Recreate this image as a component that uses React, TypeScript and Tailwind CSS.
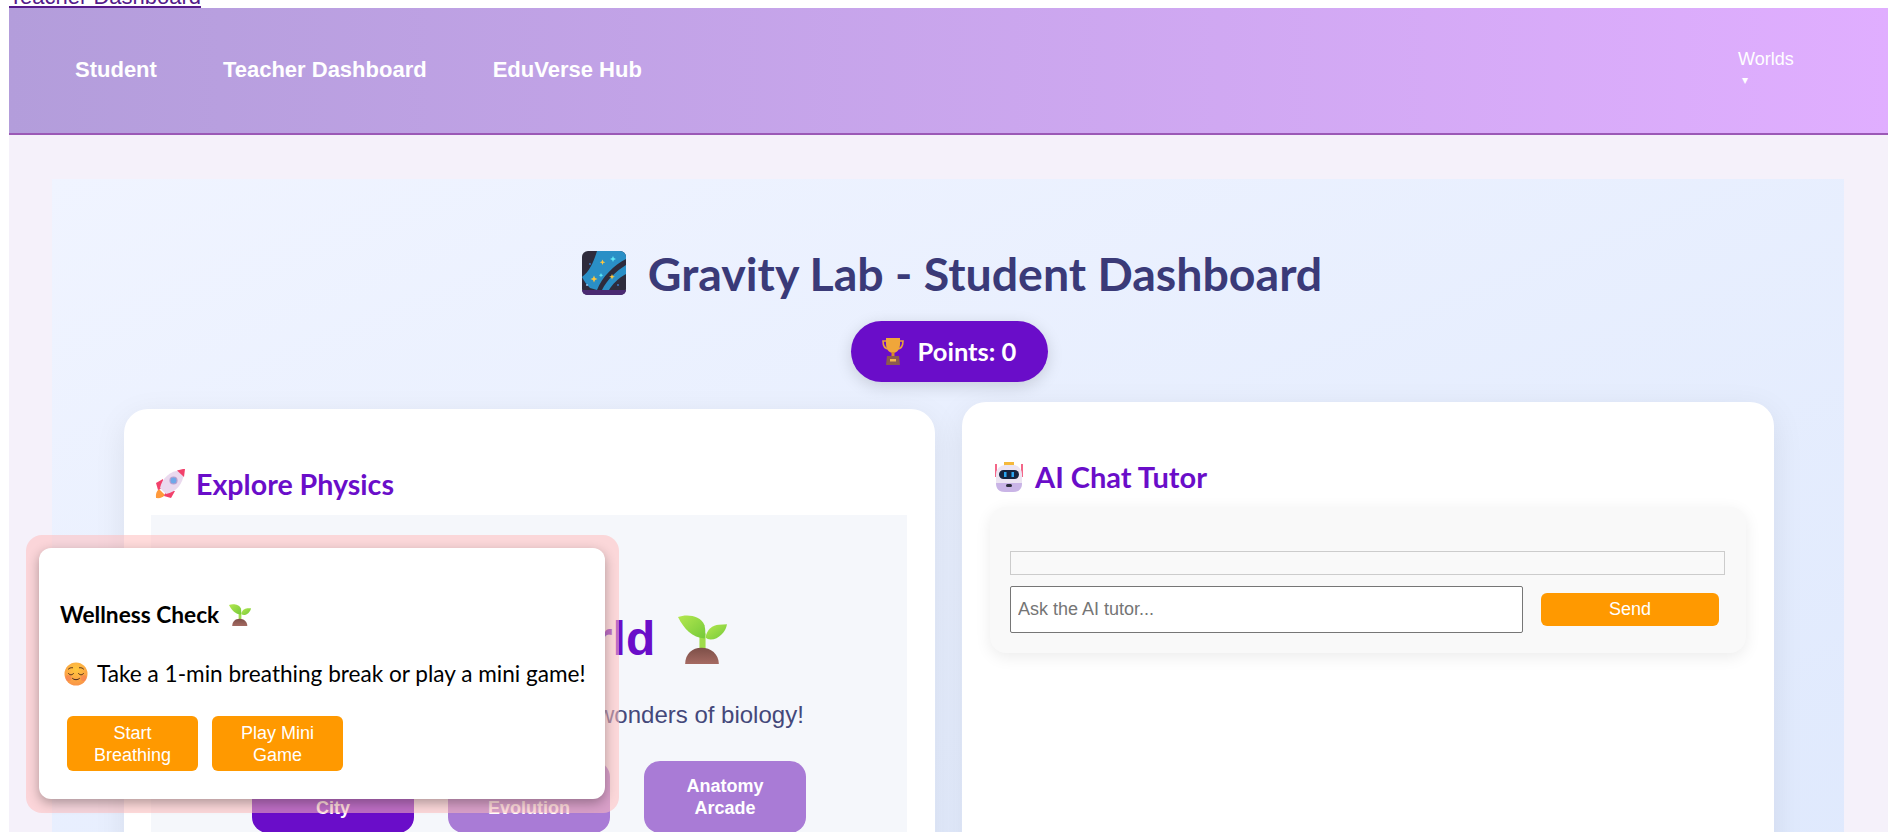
const sans = "font-['Lato',sans-serif]";

function Seedling({ className, id }: { className: string; id: string }) {
  return (
    <svg viewBox="0 0 48 48" className={className}>
      <defs>
        <linearGradient id={`${id}-leaf`} x1="0" y1="0" x2="1" y2="1">
          <stop offset="0" stopColor="#b5e84f" />
          <stop offset="1" stopColor="#74c93a" />
        </linearGradient>
        <linearGradient id={`${id}-soil`} x1="0" y1="0" x2="0" y2="1">
          <stop offset="0" stopColor="#7d4f48" />
          <stop offset="1" stopColor="#a56a62" />
        </linearGradient>
      </defs>
      <path d="M21 18h6v18h-6z" fill="#9fdc4a" />
      <path d="M0 2C8-1 22 0 26 10c1 5 1 10 0 13C14 22 6 14 0 2Z" fill={`url(#${id}-leaf)`} />
      <path d="M27 22c1-8 7-12 13-12.500L48 9c-1 7-8 15-16 15-2 0-4-1-5-2Z" fill={`url(#${id}-leaf)`} />
      <path d="M7 48c0-10 7-16 16-16s17 6 17 16Z" fill={`url(#${id}-soil)`} />
    </svg>
  );
}

function MilkyWay() {
  return (
    <svg viewBox="0 0 44 44" className="h-[44px] w-[44px] shrink-0">
      <rect width="44" height="44" rx="6" fill="#2e2b3c" />
      <path d="M15 0h23a6 6 0 0 1 6 6v2C32 14 20 26 15 39l-7-2C5 34 2 30 0 26 8 20 12 10 15 0Z" fill="#2a8fc6" />
      <path d="M44 14v9c-8 4-14 11-17 16h-7c5-10 14-19 24-25Z" fill="#2a8fc6" />
      <path d="M0 39h44a5 5 0 0 1-5 5H5a5 5 0 0 1-5-5Z" fill="#4b2a72" />
      <path d="M12 24.500l1 2.500 2.500 1-2.500 1-1 2.500-1-2.500-2.500-1 2.500-1Z" fill="#ffc83d" />
      <path d="M20.500 8.500l.8 2 2 .8-2 .8-.8 2-.8-2-2-.8 2-.8Z" fill="#ffc83d" />
      <path d="M30 23l.8 2 2 .8-2 .8-.8 2-.8-2-2-.8 2-.8Z" fill="#ffc83d" />
      <path d="M31 5l.9 2.100 2.100.9-2.100.9-.9 2.100-.9-2.100-2.100-.9 2.100-.9Z" fill="#5fe6f5" />
      <path d="M19 22l.7 1.500 1.500.7-1.500.7-.7 1.500-.7-1.500-1.500-.7 1.500-.7Z" fill="#5fe6f5" />
      <circle cx="8" cy="13" r="0.900" fill="#3f7fd0" />
      <circle cx="5" cy="34" r="0.900" fill="#9fd4ff" />
      <circle cx="36" cy="34" r="0.900" fill="#3f7fd0" />
    </svg>
  );
}

function Trophy() {
  return (
    <svg viewBox="0 0 22 27" className="h-[27px] w-[22px] shrink-0">
      <path d="M5 3H1c0 5 2 8 6 8M17 3h4c0 5-2 8-6 8" fill="none" stroke="#e8a33a" strokeWidth="1.600" />
      <path d="M4 0h14v6c0 5-3 9-7 9S4 11 4 6Z" fill="#f0a63a" />
      <path d="M9.500 14h3v5h-3z" fill="#d98a2b" />
      <path d="M5 18h12l1 9H4Z" fill="#8c5a4e" />
      <path d="M8 21h6v2.500H8z" fill="#f3b74e" />
    </svg>
  );
}

function Rocket() {
  return (
    <svg viewBox="0 0 30 30" className="h-[30px] w-[30px] shrink-0">
      <path d="M1 29c-.5-4 .5-7 3-9l6 6c-2 2.500-5 3.500-9 3Z" fill="#ff9a3c" />
      <path d="M8 10 1 14l2 7 5-2ZM20 22l-4 7-7-2 2-5Z" fill="#f2416b" />
      <path d="M5 19C7 9 15 2 26 1l3 3c-1 11-8 19-18 21Z" fill="#ead9ee" />
      <path d="M22 1.500 28 0l2 0-1 8Z" fill="#f2416b" />
      <circle cx="18.500" cy="11.500" r="3.500" fill="#6fa8e8" stroke="#b79fd0" strokeWidth="1.200" />
    </svg>
  );
}

function Robot() {
  return (
    <svg viewBox="0 0 30 30" className="h-[30px] w-[30px] shrink-0">
      <path d="M2 2v13M28 2v13" stroke="#f2416b" strokeWidth="1.600" />
      <path d="M10 0h10v4H10z" fill="#f5b93c" />
      <rect x="2" y="3" width="26" height="27" rx="9" fill="#ece4f2" />
      <path d="M2 21h26v0c0 6-3 9-9 9h-8c-6 0-9-3-9-9Z" fill="#c9b4e6" />
      <rect x="5" y="8" width="20" height="9" rx="4.500" fill="#16243f" />
      <path d="M10 10h2.500v5H10zM17.500 10H20v5h-2.500z" fill="#2aa5f0" />
      <rect x="12" y="22" width="6" height="3" rx="1.500" fill="#2b2b3a" />
    </svg>
  );
}

function Relieved() {
  return (
    <svg viewBox="0 0 24 24" className="h-[24px] w-[24px] shrink-0">
      <defs>
        <radialGradient id="face" cx="0.5" cy="0.3" r="0.8">
          <stop offset="0" stopColor="#ffc83d" />
          <stop offset="1" stopColor="#f98d4a" />
        </radialGradient>
      </defs>
      <circle cx="12" cy="12" r="11.500" fill="url(#face)" />
      <circle cx="4.500" cy="16" r="3" fill="#f6695f" opacity="0.4" />
      <circle cx="19.500" cy="16" r="3" fill="#f6695f" opacity="0.4" />
      <path
        d="M4.500 11.500c1 1.800 4 1.800 5 0M14.500 11.500c1 1.800 4 1.800 5 0M8.500 16.500c1.500 1.700 5.500 1.700 7 0M4.500 7c1-1 2.500-1.500 4-1.300M19.500 7c-1-1-2.500-1.500-4-1.300"
        fill="none"
        stroke="#4a2a1c"
        strokeWidth="1"
        strokeLinecap="round"
      />
    </svg>
  );
}

function GameButton({ first, second, active }: { first: string; second: string; active?: boolean }) {
  return (
    <button
      className={
        active
          ? "h-[72px] w-[162px] rounded-2xl bg-[#6a0dc9] text-[18px] leading-[22px] font-bold text-white"
          : "h-[72px] w-[162px] rounded-2xl bg-[#a97bd6] text-[18px] leading-[22px] font-bold text-white"
      }
    >
      {first}
      <br />
      {second}
    </button>
  );
}

export default function App() {
  return (
    <div className="relative h-[832px] overflow-hidden bg-white pl-[9px] font-['Liberation_Sans',sans-serif]">
      <a href="#" className="-mt-[14px] block h-[22px] w-fit text-[22px] leading-[22px] text-[#551a8b] underline">
        Teacher Dashboard
      </a>

      <div className="h-full bg-[#f5f1fa]">
        <nav className="flex h-[127px] items-start justify-between border-b-2 border-[#9b59b6] bg-gradient-to-r from-[#b39ddb] to-[#e0aeff] pr-[94px] pl-[66px]">
          <div className="flex gap-[66px] pt-[49px] text-[22px] leading-[26px] font-bold text-white">
            <span>Student</span>
            <span>Teacher Dashboard</span>
            <span>EduVerse Hub</span>
          </div>
          <div className="w-[56px] pt-[40px] text-[18px] leading-[22px] text-white">
            Worlds
            <div className="pl-[4px] text-[12px] leading-[20px]">▾</div>
          </div>
        </nav>

        <main className="mt-[44px] ml-[43px] h-[700px] w-[1792px] bg-gradient-to-br from-[#f0f4ff] to-[#dfe9fd] pt-[66px]">
          <h1 className={`${sans} flex items-center justify-center gap-[22px] pl-[8px] text-[46.500px] leading-[56px] font-bold text-[#3a3a78]`}>
            <MilkyWay />
            Gravity Lab - Student Dashboard
          </h1>
          <div className="mt-[20px] flex justify-center pl-[2px]">
            <div className={`${sans} flex h-[61px] w-[197px] items-center justify-center gap-[14px] rounded-full bg-[#6a0dc9] text-[25.500px] font-bold text-white shadow-[0_4px_16px_rgba(0,0,0,0.15)]`}>
              <Trophy />
              Points: 0
            </div>
          </div>

          <div className="mt-[20px] flex items-start gap-[27px] pl-[72px]">
            <section className="mt-[7px] h-[500px] w-[811px] rounded-3xl bg-white pt-[57px] pr-[28px] pl-[27px] shadow-[0_8px_32px_rgba(0,0,0,0.08)]">
              <h2 className={`${sans} flex items-center gap-[11px] pl-[4px] text-[28.600px] leading-[36px] font-bold text-[#6a0dc9]`}>
                <Rocket />
                Explore Physics
              </h2>
              <div className="mt-[13px] h-[400px] bg-[#f5f7fb] pt-[94px] text-center">
                <h3 className="flex items-center justify-center gap-[23px] text-[48px] leading-[60px] font-bold text-[#6a0dc9]">
                  Biology World
                  <Seedling id="big" className="h-[49px] w-[49px] shrink-0" />
                </h3>
                <p className="mt-[31px] text-[24px] leading-[30px] text-[#44487a]">
                  Explore life, organisms, and the wonders of biology!
                </p>
                <div className="mt-[31px] flex justify-center gap-[34px]">
                  <GameButton first="Cell" second="City" active />
                  <GameButton first="Species" second="Evolution" />
                  <GameButton first="Anatomy" second="Arcade" />
                </div>
              </div>
            </section>

            <section className="h-[500px] w-[812px] rounded-3xl bg-white px-[28px] pt-[57px] shadow-[0_8px_32px_rgba(0,0,0,0.08)]">
              <h2 className={`${sans} flex items-center gap-[11px] pl-[4px] text-[29px] leading-[36px] font-bold text-[#6a0dc9]`}>
                <Robot />
                AI Chat Tutor
              </h2>
              <div className="mt-[12px] h-[146px] w-[756px] rounded-2xl bg-[#f9f9f9] px-[20px] pt-[44px] shadow-[0_4px_16px_rgba(0,0,0,0.08)]">
                <div className="h-[24px] w-[715px] border border-[#cccccc]" />
                <div className="mt-[11px] flex items-center gap-[18px]">
                  <input
                    placeholder="Ask the AI tutor..."
                    className="h-[47px] w-[513px] rounded-[2px] border border-[#767676] bg-white px-[7px] text-[18px] placeholder:text-[#757575]"
                  />
                  <button className="h-[33px] w-[178px] rounded-md bg-[#ff9900] text-[18px] text-white">Send</button>
                </div>
              </div>
            </section>
          </div>
        </main>
      </div>

      <aside className="absolute top-[535px] left-[26px] rounded-2xl bg-[rgba(255,190,190,0.55)] pt-[13px] pr-[14px] pb-[14px] pl-[13px]">
        <div className="h-[251px] w-[566px] rounded-xl bg-white pt-[51px] pl-[21px] shadow-[0_4px_12px_rgba(0,0,0,0.3)]">
          <h4 className={`${sans} flex items-center gap-[10px] text-[22.700px] leading-[32px] font-bold text-black`}>
            Wellness Check
            <Seedling id="small" className="h-[22px] w-[22px] shrink-0" />
          </h4>
          <p className={`${sans} mt-[29px] flex items-center gap-[9px] pl-[4px] text-[22.600px] leading-[28px] text-black`}>
            <Relieved />
            Take a 1-min breathing break or play a mini game!
          </p>
          <div className="mt-[28px] flex gap-[14px] pl-[7px]">
            <button className="h-[55px] w-[131px] rounded-md bg-[#ff9900] text-[18px] leading-[22px] text-white">
              Start
              <br />
              Breathing
            </button>
            <button className="h-[55px] w-[131px] rounded-md bg-[#ff9900] text-[18px] leading-[22px] text-white">
              Play Mini
              <br />
              Game
            </button>
          </div>
        </div>
      </aside>
    </div>
  );
}
